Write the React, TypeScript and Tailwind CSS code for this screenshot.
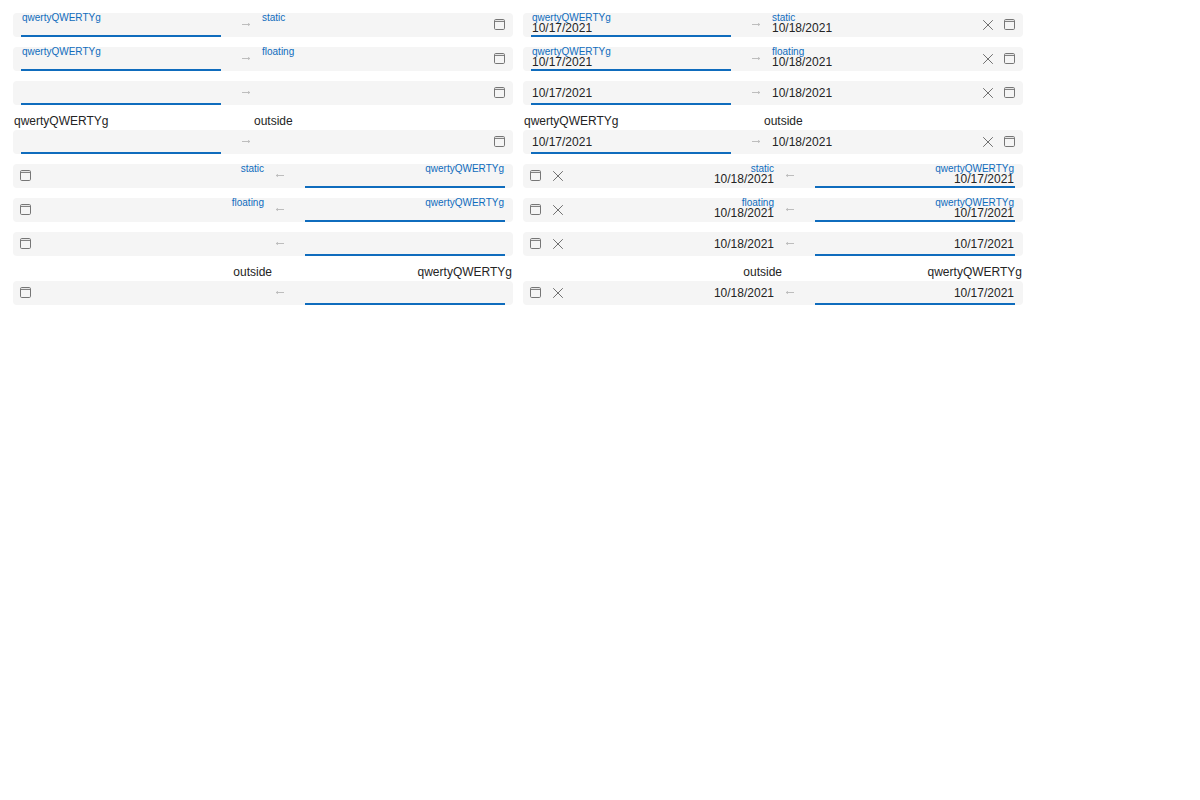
import React from "react";

type Mode = "static" | "floating" | "hidden" | "outside";

const modes: Mode[] = ["static", "floating", "hidden", "outside"];
const startLabel = "qwertyQWERTYg";

function CalendarIcon() {
  return (
    <svg width="11" height="11" viewBox="0 0 11 11" fill="none" stroke="#767676">
      <rect x="0.5" y="0.5" width="10" height="10" rx="1.2" />
      <path d="M1 2.4H10" />
    </svg>
  );
}

function ClearIcon() {
  return (
    <svg width="10" height="10" viewBox="0 0 10 10" fill="none" stroke="#707070">
      <path d="M0.2 0.2L9.8 9.8M9.8 0.2L0.2 9.8" />
    </svg>
  );
}

function ArrowIcon() {
  return (
    <svg width="8" height="3" viewBox="0 0 8 3" fill="#bdbdbd" className="rtl:-scale-x-100">
      <path d="M0 1H8V2H0Z" />
      <path d="M6 0H7V1H6ZM6 2H7V3H6Z" fillOpacity="0.8" />
      <path d="M7 0H8V1H7ZM7 2H8V3H7Z" fillOpacity="0.15" />
    </svg>
  );
}

function Field({ label, value, active, mode }: { label: string; value?: string; active?: boolean; mode: Mode }) {
  const inner = mode === "static" || mode === "floating";
  return (
    <div
      className={`relative flex h-6 w-50 shrink-0 items-center border-b-2 px-px ${active ? "border-[#0f6cbd]" : "border-transparent"}`}
    >
      {inner && (
        <span className="absolute start-px top-0 text-[10px] leading-[10px] whitespace-nowrap text-[#0f6cbd]">{label}</span>
      )}
      {value && <span className={`text-[12px] leading-4 ${inner ? "pt-2" : "pt-0.5"}`}>{value}</span>}
    </div>
  );
}

function RangeBox({ mode, filled, rtl }: { mode: Mode; filled: boolean; rtl: boolean }) {
  return (
    <div dir={rtl ? "rtl" : "ltr"} className="w-[500px]">
      {mode === "outside" && (
        <div className="flex h-[15px] px-px text-[12px] leading-3">
          <span className="w-60">{startLabel}</span>
          <span>outside</span>
        </div>
      )}
      <div className="flex h-6 items-center rounded bg-[#f5f5f5] ps-2">
        <Field label={startLabel} value={filled ? "10/17/2021" : undefined} active mode={mode} />
        <div className="flex w-10 shrink-0 justify-start ps-[21px] pb-px">
          <ArrowIcon />
        </div>
        <Field label={mode} value={filled ? "10/18/2021" : undefined} mode={mode} />
        <div className="flex w-[33px] shrink-0 items-center ps-3">{filled && <ClearIcon />}</div>
        <div className="flex pb-px rtl:ps-px">
          <CalendarIcon />
        </div>
      </div>
    </div>
  );
}

export default function App() {
  return (
    <main className="min-h-screen bg-white p-[13px] font-['Liberation_Sans',Arial,sans-serif] text-[#242424]">
      <div className="grid grid-cols-[500px_500px] gap-2.5">
        {[false, true].map((rtl) =>
          modes.map((mode) => (
            <React.Fragment key={`${mode}-${rtl}`}>
              <RangeBox mode={mode} filled={false} rtl={rtl} />
              <RangeBox mode={mode} filled rtl={rtl} />
            </React.Fragment>
          )),
        )}
      </div>
    </main>
  );
}
